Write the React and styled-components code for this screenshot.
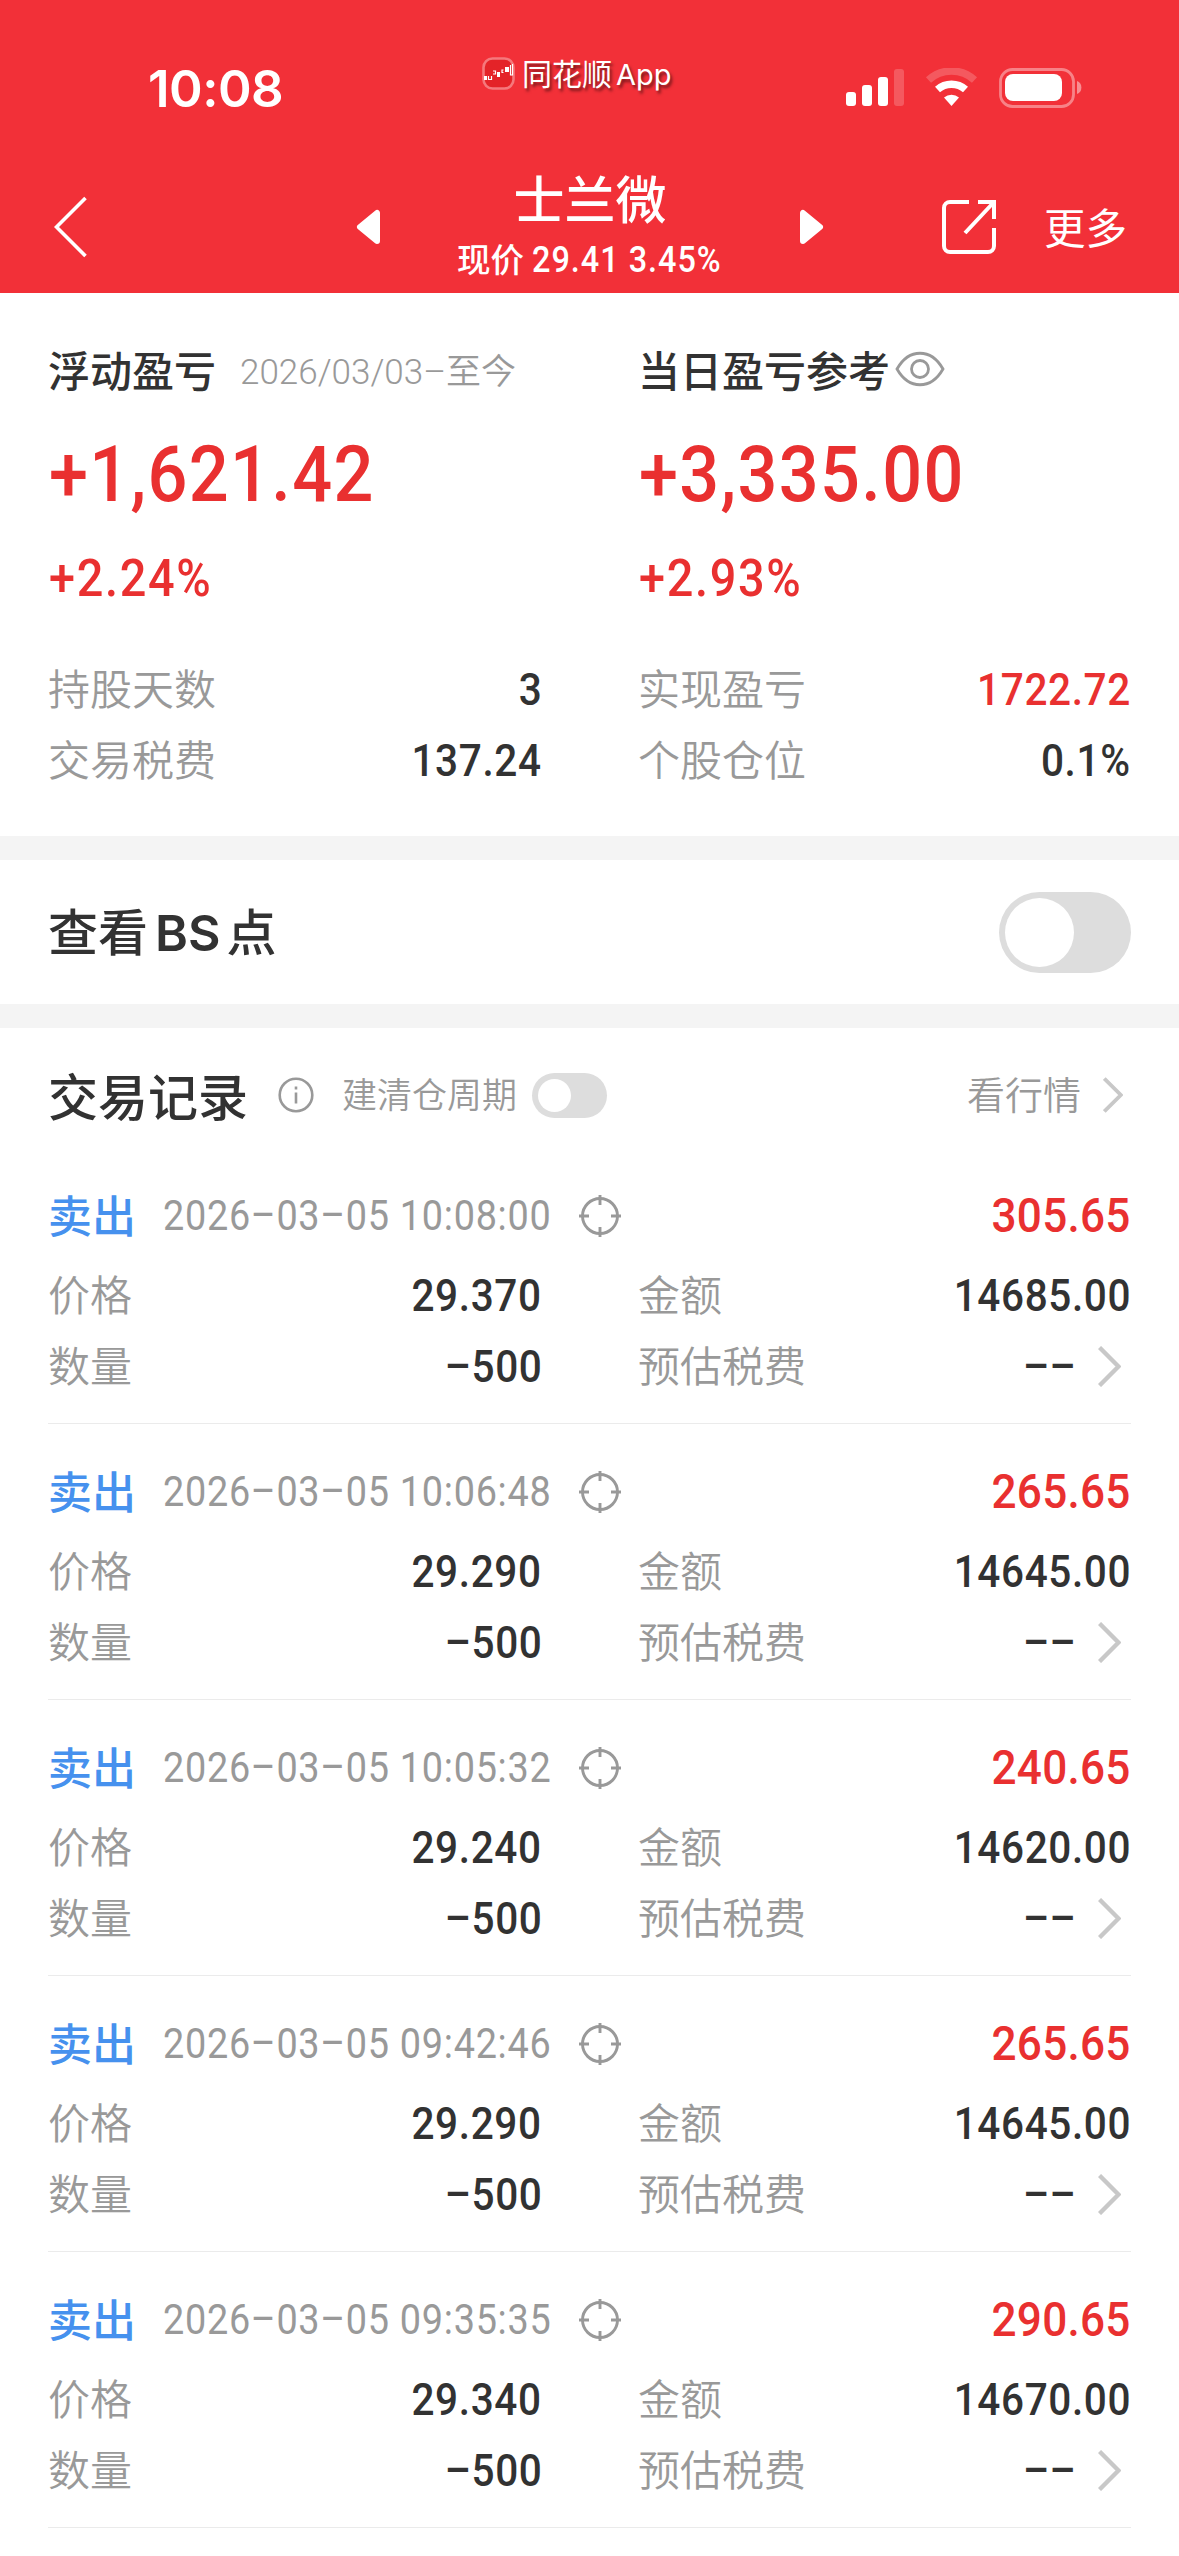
import styled, { createGlobalStyle } from "styled-components";

const records = [
  { time: "2026–03–05 10:08:00", profit: "305.65", price: "29.370", amount: "14685.00" },
  { time: "2026–03–05 10:06:48", profit: "265.65", price: "29.290", amount: "14645.00" },
  { time: "2026–03–05 10:05:32", profit: "240.65", price: "29.240", amount: "14620.00" },
  { time: "2026–03–05 09:42:46", profit: "265.65", price: "29.290", amount: "14645.00" },
  { time: "2026–03–05 09:35:35", profit: "290.65", price: "29.340", amount: "14670.00" },
];

const StatusIcons = () => (
  <svg width="236" height="40" viewBox="0 0 236 40">
    <g fill="#fff">
      <rect x="0" y="24" width="10" height="14" rx="3" />
      <rect x="16" y="17" width="10" height="21" rx="3" />
      <rect x="32" y="9" width="10" height="29" rx="3" />
      <rect x="48" y="1" width="10" height="37" rx="3" opacity="0.2" />
      <path d="M98 29.500a11.500 11.500 0 0 1 15 0l-7.500 8.500z" />
      <rect x="159" y="6" width="57" height="27" rx="8" />
      <path d="M231 13v13a7 7 0 0 0 0-13z" opacity="0.45" />
    </g>
    <path d="M91.500 22.500a21 21 0 0 1 28 0" transform="translate(0 -1)" fill="none" stroke="#fff" strokeWidth="7.500" />
    <path d="M82.500 13a34 34 0 0 1 46 0" transform="translate(0 -1)" fill="none" stroke="#fff" strokeWidth="7.500" opacity="0.2" />
    <rect x="154.500" y="1.500" width="73" height="37" rx="12" fill="none" stroke="#fff" strokeWidth="2.800" opacity="0.4" />
  </svg>
);

const AppLogo = () => (
  <svg width="33" height="33" viewBox="0 0 33 33">
    <rect x="1.500" y="1.500" width="30" height="30" rx="9" fill="#e42328" stroke="#f5787c" strokeWidth="2.600" />
    <g fill="#fff">
      <path d="M2 19h3v4H2zM15 15h3v5h-3zM23 10h4v5h-4z" />
      <path d="M6.500 19v3.500h3V19M11 14h2.500v3H11M21.500 13H20v2.500h1.500M28.500 8v10h2V7" fill="none" stroke="#fff" strokeWidth="1.200" />
    </g>
  </svg>
);

const Chevron = ({ width, height }) => (
  <svg width={width} height={height} viewBox="0 0 23 41">
    <path d="M1.500 1.500l19 19-19 19" fill="none" stroke="#c8c8c8" strokeWidth="4.400" />
  </svg>
);

const Target = () => (
  <svg width="42" height="42" viewBox="0 0 42 42" fill="none" stroke="#999" strokeWidth="2.900">
    <circle cx="21" cy="21" r="17.500" />
    <path d="M21 0v10M21 32v10M0 21h10M32 21h10" />
  </svg>
);

const RecordItem = ({ record }) => (
  <Record>
    <RecordHead>
      <Side>卖出</Side>
      <Time>{record.time}</Time>
      <Target />
      <Profit>{record.profit}</Profit>
    </RecordHead>
    <Pairs>
      <Pair><Label>价格</Label><Value>{record.price}</Value></Pair>
      <Pair><Label>金额</Label><Value>{record.amount}</Value></Pair>
      <Pair><Label>数量</Label><Value>–500</Value></Pair>
      <Pair>
        <Label>预估税费</Label>
        <Fee><Value>––</Value><Chevron width="23" height="41" /></Fee>
      </Pair>
    </Pairs>
  </Record>
);

const App = () => {
  return (
    <Page>
      <GlobalStyle />
      <Header>
        <StatusBar>
          <Clock>10:08</Clock>
          <Brand><AppLogo /><BrandName>同花顺<span>App</span></BrandName></Brand>
          <StatusIcons />
        </StatusBar>
        <NavBar>
          <svg width="34" height="62" viewBox="0 0 34 62">
            <path d="M31.500 2L2.500 31l29 29" fill="none" stroke="#fff" strokeWidth="3.600" />
          </svg>
          <StockPicker>
            <svg width="24" height="36" viewBox="0 0 24 36">
              <path d="M21 4v28L4 18z" fill="#fff" stroke="#fff" strokeWidth="6" strokeLinejoin="round" />
            </svg>
            <StockInfo>
              <StockName>士兰微</StockName>
              <StockPrice>现价<Quote>29.41 3.45%</Quote></StockPrice>
            </StockInfo>
            <svg width="24" height="36" viewBox="0 0 24 36">
              <path d="M3 4v28l17-14z" fill="#fff" stroke="#fff" strokeWidth="6" strokeLinejoin="round" />
            </svg>
          </StockPicker>
          <NavActions>
            <svg width="56" height="56" viewBox="0 0 56 56" fill="none" stroke="#fff" strokeWidth="4">
              <path d="M28 3H9a6 6 0 0 0-6 6v38a6 6 0 0 0 6 6h38a6 6 0 0 0 6-6V29M37 3h16v17M53 3L24 34" />
            </svg>
            <More>更多</More>
          </NavActions>
        </NavBar>
      </Header>

      <Summary>
        <SummaryColumn>
          <SummaryTitle>浮动盈亏<Since>2026/03/03–至今</Since></SummaryTitle>
          <Total>+1,621.42</Total>
          <Percent>+2.24%</Percent>
        </SummaryColumn>
        <SummaryColumn>
          <SummaryTitle>
            当日盈亏参考
            <Eye width="50" height="36" viewBox="0 0 50 36">
              <path d="M2 18C14-3 36-3 48 18C36 39 14 39 2 18z" />
              <circle cx="25" cy="18" r="8.500" />
            </Eye>
          </SummaryTitle>
          <Total>+3,335.00</Total>
          <Percent>+2.93%</Percent>
        </SummaryColumn>
      </Summary>
      <Pairs>
        <Pair><Label>持股天数</Label><Value>3</Value></Pair>
        <Pair><Label>实现盈亏</Label><Value $red>1722.72</Value></Pair>
        <Pair><Label>交易税费</Label><Value>137.24</Value></Pair>
        <Pair><Label>个股仓位</Label><Value>0.1%</Value></Pair>
      </Pairs>

      <SwitchRow>
        <SectionTitle>查看<Latin>BS</Latin>点</SectionTitle>
        <Toggle $width={132} $height={81}><Knob /></Toggle>
      </SwitchRow>

      <RecordsTitle>
        <SectionTitle>交易记录</SectionTitle>
        <Info width="36" height="36" viewBox="0 0 36 36">
          <circle cx="18" cy="18" r="16.300" />
          <path d="M18 15.500v11M18 9.500v3" />
        </Info>
        <Cycle>建清仓周期</Cycle>
        <Toggle $width={75} $height={45}><Knob /></Toggle>
        <Quotes><span>看行情</span><Chevron width="20" height="36" /></Quotes>
      </RecordsTitle>
      {records.map((record) => (
        <RecordItem key={record.time} record={record} />
      ))}
    </Page>
  );
};

export default App;

const GlobalStyle = createGlobalStyle`
  body {
    margin: 0;
    background: #ffffff;
  }
`;

const Page = styled.div`
  width: 1179px;
  height: 2556px;
  overflow: hidden;
  background: #ffffff;
  color: #323232;
  font-family: "Noto Sans CJK SC", sans-serif;
  font-size: 42px;
  svg {
    flex-shrink: 0;
  }
`;

/* figures are set slightly condensed */
const Figure = styled.span`
  display: block;
  font-family: Roboto, sans-serif;
  font-weight: 500;
  white-space: nowrap;
  transform: scaleX(0.9);
  transform-origin: ${(props) => (props.$end ? "right" : "left")} center;
`;

const Header = styled.header`
  height: 293px;
  background: #f23038;
  color: #ffffff;
`;

const StatusBar = styled.div`
  display: grid;
  grid-template-columns: 334px 364px 1fr;
  align-items: center;
  height: 168px;
  padding: 8px 97px 0 148px;
  box-sizing: border-box;
`;

const Clock = styled.div`
  padding-top: 1px;
  font: 600 51px/60px Inter, sans-serif;
  letter-spacing: -0.5px;
`;

const Brand = styled.div`
  display: flex;
  align-items: center;
  gap: 7px;
  height: 60px;
  margin-top: -29px;
`;

const BrandName = styled.div`
  font-size: 30px;
  line-height: 40px;
  text-shadow: 2px 3px 3px rgba(0, 0, 0, 0.5);
  span {
    margin-left: 4px;
    font-family: Inter, sans-serif;
    font-size: 29px;
  }
`;

const NavBar = styled.nav`
  display: flex;
  align-items: center;
  height: 117px;
  padding: 0 52px 0 54px;
`;

const StockPicker = styled.div`
  display: flex;
  align-items: center;
  justify-content: space-between;
  width: 468px;
  margin-left: 268px;
`;

const StockInfo = styled.div`
  display: flex;
  flex-direction: column;
  align-items: center;
  padding-top: 3px;
`;

const StockName = styled.div`
  font-size: 51px;
  font-weight: 500;
  line-height: 60px;
`;

const StockPrice = styled.div`
  display: flex;
  align-items: center;
  font-size: 33.5px;
  font-weight: 500;
  line-height: 60px;
  white-space: nowrap;
`;

const Quote = styled(Figure)`
  margin: 3px -20px 0 8px;
  font-size: 36px;
  letter-spacing: 1.1px;
`;

const NavActions = styled.div`
  display: flex;
  align-items: center;
  gap: 47px;
  margin-left: auto;
`;

const More = styled.div`
  padding-bottom: 2px;
  font-size: 41.5px;
  line-height: 56px;
`;

const Summary = styled.section`
  display: grid;
  grid-template-columns: 491px 491px;
  column-gap: 99px;
  padding: 45px 48px 45px 48px;
`;

const SummaryColumn = styled.div`
  white-space: nowrap;
`;

const SummaryTitle = styled.div`
  display: flex;
  align-items: center;
  height: 60px;
  font-weight: 500;
`;

const Since = styled.span`
  margin-left: 24px;
  color: #999999;
  font-family: Roboto, "Noto Sans CJK SC", sans-serif;
  font-size: 35px;
  font-weight: 350;
`;

const Eye = styled.svg`
  margin: 2px 0 0 5px;
  fill: none;
  stroke: #999999;
  stroke-width: 2.8;
`;

const Total = styled(Figure)`
  margin: 29px 0 0 1px;
  color: #e93030;
  font-size: 78px;
  line-height: 96px;
  letter-spacing: 1.5px;
`;

const Percent = styled(Figure)`
  margin: 26px 0 0 1px;
  color: #e93030;
  font-size: 52px;
  line-height: 60px;
  letter-spacing: 1.9px;
`;

const Pairs = styled.div`
  display: grid;
  grid-template-columns: 493px 492px;
  column-gap: 97px;
  padding: 0 49px 0 48px;
`;

const Pair = styled.div`
  display: flex;
  align-items: center;
  justify-content: space-between;
  height: 71px;
`;

const Label = styled.span`
  padding-bottom: 7px;
  color: #999999;
  font-size: 42px;
  font-weight: 350;
`;

const Value = styled(Figure).attrs({ $end: true })`
  margin-right: -1px;
  color: ${(props) => (props.$red ? "#e93030" : "#323232")};
  font-size: 45px;
  line-height: 60px;
  letter-spacing: 0.7px;
`;

const Fee = styled.div`
  display: flex;
  align-items: center;
  gap: 23px;
  margin-right: 9px;
`;

const SwitchRow = styled.section`
  display: flex;
  align-items: center;
  justify-content: space-between;
  height: 144px;
  margin-top: 40px;
  padding: 0 48px;
  border-top: 24px solid #f4f4f4;
  border-bottom: 24px solid #f4f4f4;
`;

const SectionTitle = styled.h2`
  margin: 0;
  padding-bottom: 3px;
  font-size: 50px;
  font-weight: 500;
  line-height: 60px;
`;

const Latin = styled.span`
  margin: 0 6px 0 7px;
  font-family: Inter, sans-serif;
  font-weight: 600;
`;

const Toggle = styled.div`
  display: flex;
  align-items: center;
  width: ${(props) => props.$width}px;
  height: ${(props) => props.$height}px;
  padding: 6px;
  border-radius: 41px;
  background: #dddddd;
  box-sizing: border-box;
`;

const Knob = styled.div`
  height: 100%;
  aspect-ratio: 1;
  border-radius: 50%;
  background: #ffffff;
`;

const RecordsTitle = styled.div`
  display: flex;
  align-items: center;
  height: 134px;
  padding: 0 56px 0 48px;
`;

const Info = styled.svg`
  margin-left: 30px;
  fill: none;
  stroke: #999999;
  stroke-width: 2.6;
`;

const Cycle = styled.span`
  margin: 0 15px 0 28px;
  padding-bottom: 5px;
  color: #999999;
  font-size: 35px;
  font-weight: 350;
`;

const Quotes = styled.div`
  display: flex;
  align-items: center;
  gap: 22px;
  margin-left: auto;
  color: #999999;
  font-size: 38px;
  font-weight: 350;
  span {
    padding-bottom: 5px;
  }
`;

const Record = styled.section`
  height: 276px;
  padding-top: 9px;
  box-sizing: border-box;
  /* the divider is inset by the page gutter */
  background: linear-gradient(#ebebeb, #ebebeb) 48px 261px / 1083px 1px no-repeat;
`;

const RecordHead = styled.div`
  display: flex;
  align-items: center;
  height: 89px;
  padding: 0 48px;
`;

const Side = styled.span`
  padding-bottom: 4px;
  color: #4691ee;
  font-size: 44px;
  font-weight: 500;
`;

const Time = styled(Figure)`
  width: 392px;
  margin: 1px 24px 0 27px;
  color: #999999;
  font-weight: 400;
  font-size: 42px;
  line-height: 60px;
  letter-spacing: 0.8px;
`;

const Profit = styled(Figure).attrs({ $end: true })`
  margin-left: auto;
  color: #e93030;
  font-size: 49px;
  line-height: 60px;
  letter-spacing: 0.3px;
`;
